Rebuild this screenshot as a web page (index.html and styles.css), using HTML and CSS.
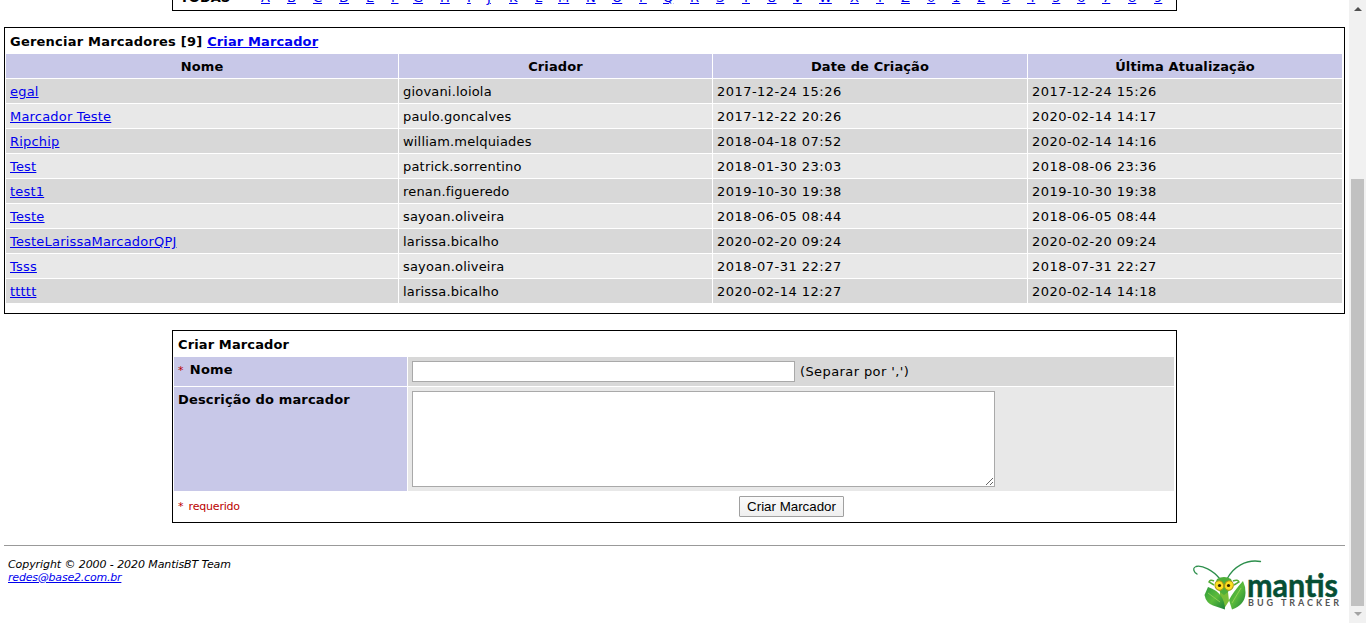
FILE: index.html
```
<!DOCTYPE html>
<html lang="pt-BR">
<head>
<meta charset="utf-8">
<title>Gerenciar Marcadores</title>
<link rel="stylesheet" href="styles.css">
</head>
<body>
<main class="page">
<nav class="filter"><b class="all">TODAS</b><a href="#">A</a><a href="#">B</a><a href="#">C</a><a href="#">D</a><a href="#">E</a><a href="#">F</a><a href="#">G</a><a href="#">H</a><a href="#">I</a><a href="#">J</a><a href="#">K</a><a href="#">L</a><a href="#">M</a><a href="#">N</a><a href="#">O</a><a href="#">P</a><a href="#">Q</a><a href="#">R</a><a href="#">S</a><a href="#">T</a><a href="#">U</a><a href="#">V</a><a href="#">W</a><a href="#">X</a><a href="#">Y</a><a href="#">Z</a><a href="#">0</a><a href="#">1</a><a href="#">2</a><a href="#">3</a><a href="#">4</a><a href="#">5</a><a href="#">6</a><a href="#">7</a><a href="#">8</a><a href="#">9</a></nav>
<section class="tags">
<h2 class="title">Gerenciar Marcadores [9] <a href="#">Criar Marcador</a></h2>
<div class="row head"><span>Nome</span><span>Criador</span><span>Date de Criação</span><span>Última Atualização</span></div>
<div class="row odd"><a href="#">egal</a><span>giovani.loiola</span><span class="date">2017-12-24 15:26</span><span class="date">2017-12-24 15:26</span></div>
<div class="row"><a href="#">Marcador Teste</a><span>paulo.goncalves</span><span class="date">2017-12-22 20:26</span><span class="date">2020-02-14 14:17</span></div>
<div class="row odd"><a href="#">Ripchip</a><span>william.melquiades</span><span class="date">2018-04-18 07:52</span><span class="date">2020-02-14 14:16</span></div>
<div class="row"><a href="#">Test</a><span>patrick.sorrentino</span><span class="date">2018-01-30 23:03</span><span class="date">2018-08-06 23:36</span></div>
<div class="row odd"><a href="#">test1</a><span>renan.figueredo</span><span class="date">2019-10-30 19:38</span><span class="date">2019-10-30 19:38</span></div>
<div class="row"><a href="#">Teste</a><span>sayoan.oliveira</span><span class="date">2018-06-05 08:44</span><span class="date">2018-06-05 08:44</span></div>
<div class="row odd"><a href="#">TesteLarissaMarcadorQPJ</a><span>larissa.bicalho</span><span class="date">2020-02-20 09:24</span><span class="date">2020-02-20 09:24</span></div>
<div class="row"><a href="#">Tsss</a><span>sayoan.oliveira</span><span class="date">2018-07-31 22:27</span><span class="date">2018-07-31 22:27</span></div>
<div class="row odd"><a href="#">ttttt</a><span>larissa.bicalho</span><span class="date">2020-02-14 12:27</span><span class="date">2020-02-14 14:18</span></div>
</section>
<form class="create">
<h2 class="title">Criar Marcador</h2>
<div class="field name"><label><span class="required">*</span> Nome</label><div class="control odd"><input type="text"><span>(Separar por ',')</span></div></div>
<div class="field desc"><label>Descrição do marcador</label><div class="control"><textarea></textarea></div></div>
<div class="actions"><span class="required note"><span class="star">*</span> requerido</span><button type="button">Criar Marcador</button></div>
</form>
<footer class="footer">
<address>Copyright © 2000 - 2020 MantisBT Team<br><a href="#">redes@base2.com.br</a></address>
<svg class="logo" width="150" height="54" viewBox="1191 558 150 54" role="img" aria-label="mantis bug tracker">
<defs>
<linearGradient id="leg" x1="0" y1="0" x2="1" y2="1"><stop offset="0" stop-color="#2c9c3a"/><stop offset=".5" stop-color="#5cbb3c"/><stop offset="1" stop-color="#188038"/></linearGradient>
</defs>
<g fill="none" stroke="#2d8f4c" stroke-width="1.300" stroke-linecap="round"><path d="M1220 579C1213 570 1202 565 1196 566.500Q1192 568 1195 572.500L1197 574"/><path d="M1227 579C1233 567 1246 559 1260.500 561.500"/></g>
<path d="M1214 581q-4-2-5 1l5 3M1233 581q5-2 6 1l-5 3" fill="none" stroke="#55ad37" stroke-width="1.500"/>
<path d="M1220 592h8l1 9-4.500 7-5-7z" fill="#79bd37"/>
<path d="M1208 587L1204.500 595Q1206 603 1213 605.500L1225 609.500Q1225 602 1221 596Q1217 590 1208 587z" fill="url(#leg)"/>
<path d="M1243 581Q1233 592 1229 600L1232 609.500Q1245 605 1245.500 593Q1245.500 586 1243 581z" fill="url(#leg)"/>
<path d="M1208 593l12 9M1241 588l-9 15" stroke="#9bd35b" stroke-width=".8"/>
<path d="M1217 579q7-4 14 0l2 5-5 8-4 3-4-3-5-8z" fill="#4eae38"/>
<ellipse cx="1219.300" cy="585.500" rx="4.300" ry="4.800" transform="rotate(-20 1219.300 585.500)" fill="#ffdf22" stroke="#a99819"/>
<ellipse cx="1229" cy="585.500" rx="4.300" ry="4.800" transform="rotate(20 1229 585.500)" fill="#ffdf22" stroke="#a99819"/>
<circle cx="1219.500" cy="585.500" r="1.600" fill="#332600"/><circle cx="1228.500" cy="585.500" r="1.600" fill="#332600"/>
<text class="brand" x="1247" y="597.300" textLength="91" lengthAdjust="spacingAndGlyphs">mantis</text>
<text class="tagline" x="1248" y="605.800" textLength="91">BUG TRACKER</text>
</svg>
</footer>
</main>
<aside class="scrollbar"><i class="up"></i><i class="thumb"></i><i class="down"></i></aside>
</body>
</html>
```
FILE: styles.css
```
*{box-sizing:border-box}
body{margin:0;height:623px;overflow:hidden;display:flex;background:#fff;color:#000;font:13px/15px Verdana,"DejaVu Sans",sans-serif}
a{color:#00e}
.page{width:1349px;padding:0 4px}
.filter{width:1005px;height:27px;margin:-16px 0 0 168px;padding:5px 0 6px 7px;border:1px solid #000;display:grid;grid-template-columns:81px 26px 26px 26px 27px 25px 22px 27px 27px 20px 22px 26px 23px 28px 26px 27px 24px 27px 26px 26px 25px 26px 26px 31px 26px 25px 26px repeat(7,25px) 26px 26px 10px}
.tags{width:1341px;height:287px;margin-top:16px;padding:1px;border:1px solid #000;letter-spacing:.19px}
.title{height:25px;margin:0;padding:5px 4px;font-size:13px;line-height:15px;letter-spacing:.12px}
.tags .title{letter-spacing:.22px}
.tags .title a{letter-spacing:.12px}
.row{display:grid;grid-template:24px / 392px 313px 314px 314px;gap:1px;height:24px;margin-bottom:1px}
.row>*{background:#e8e8e8;padding:5px 4px;white-space:nowrap}
.row.odd>*{background:#d8d8d8}
.row.head>*{background:#c8c8e8;font-weight:bold;text-align:center;letter-spacing:.12px}
.row .date{letter-spacing:.47px}
.create{width:1005px;height:193px;margin:16px 0 0 168px;padding:1px;border:1px solid #000}
.field{display:grid;grid-template-columns:233px 766px;gap:1px;margin-bottom:1px}
.field label{background:#c8c8e8;padding:5px 4px;font-weight:bold;letter-spacing:.16px}
.name{height:29px}
.desc{height:104px}
.control{background:#e8e8e8;padding:4px;display:flex;gap:5px;line-height:21px;letter-spacing:.4px}
.control.odd{background:#d8d8d8}
.required{color:#b00;font-weight:normal;font-size:11px}
label .required{margin-right:1.500px}
.note{letter-spacing:-.2px}
.star{margin-right:2px}
input{width:383px;height:21px;border:1px solid #a9a9a9;background:#fff}
textarea{width:583px;height:96px;border:1px solid #a9a9a9;background:#fff;resize:both}
.actions{display:grid;grid-template-columns:561px 105px;padding:4px;align-items:center}
button{width:105px;height:21px;padding:0;border:1px solid #a0a0a0;border-radius:1px;background:linear-gradient(#fafafa,#efefef);font:13.333px "Liberation Sans",sans-serif;color:#000}
.footer{margin-top:22px;border-top:1px solid #999;display:flex;justify-content:space-between;padding:12px 4px 0}
address{font:italic 11px/13px Verdana,"DejaVu Sans",sans-serif;letter-spacing:-.08px}
address a{letter-spacing:-.2px}
.logo{display:block}
.brand{font:700 33px Lato,sans-serif;fill:#064f35;stroke:#064f35;stroke-width:.5px}
.tagline{font:bold 9px Lato,sans-serif;fill:#555}
.scrollbar{width:17px;background:#f1f1f1;padding:0 2px;display:flex;flex-direction:column;align-items:center}
.up,.down{width:0;height:0;border:4px solid transparent}
.up{border-top:0;border-bottom-color:#505050;margin-top:7px}
.down{border-bottom:0;border-top-color:#a3a3a3;margin-top:6px}
.thumb{width:13px;height:427px;background:#c1c1c1;margin-top:168px}
```
